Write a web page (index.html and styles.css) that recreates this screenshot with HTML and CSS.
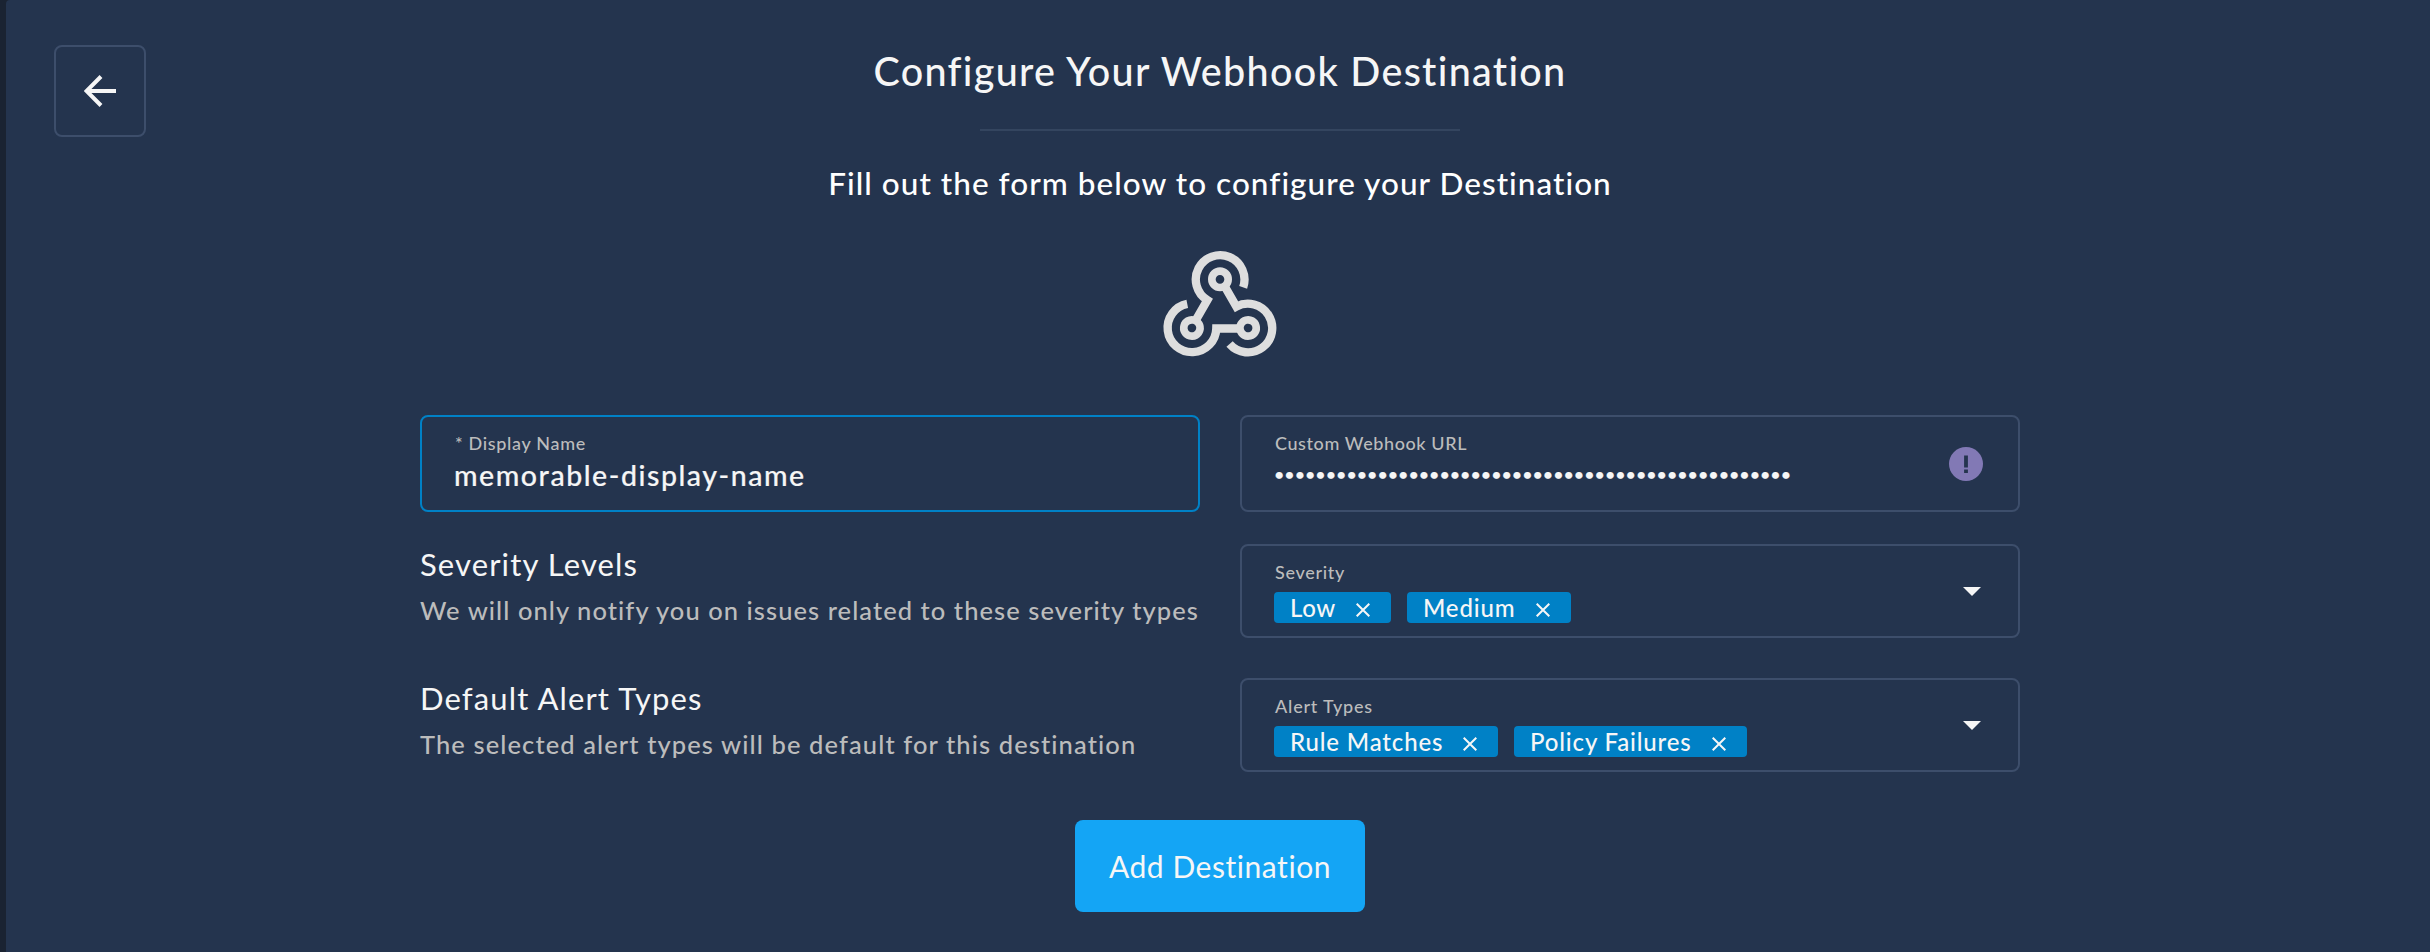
FILE: index.html
```html
<!DOCTYPE html>
<html lang="en">
<head>
<meta charset="utf-8">
<title>Configure Your Webhook Destination</title>
<link rel="stylesheet" href="styles.css">
</head>
<body>
<aside class="rail"></aside>
<main class="page">
  <button class="back" aria-label="Back">
    <svg width="32" height="32" viewBox="0 0 32 32"><path d="M32 16H4M17 1.5 2.5 16 17 30.5" fill="none" stroke="#f6f6f6" stroke-width="4"/></svg>
  </button>
  <section class="content">
    <h1 class="title">Configure Your Webhook Destination</h1>
    <hr class="divider">
    <p class="subtitle">Fill out the form below to configure your Destination</p>
    <svg class="hook" width="116" height="108" viewBox="66 60 348 324">
      <defs>
        <g id="arm" fill="none" stroke="#dedede">
          <path d="M309.5 172A73 73 0 1 0 202 210.500L167 271.100" stroke-width="25"/>
          <circle cx="240" cy="148" r="24.500" stroke-width="23"/>
        </g>
      </defs>
      <use href="#arm"/>
      <use href="#arm" transform="rotate(120 240 245.3)"/>
      <use href="#arm" transform="rotate(240 240 245.3)"/>
    </svg>
    <form class="form">
      <div class="field field-active">
        <label class="label">* Display Name</label>
        <div class="value name">memorable-display-name</div>
      </div>
      <div class="field">
        <label class="label label-url">Custom Webhook URL</label>
        <div class="value secret">••••••••••••••••••••••••••••••••••••••••••••••••••</div>
        <svg class="alert" width="34" height="34" viewBox="0 0 34 34"><circle cx="17" cy="17" r="17" fill="#8279b5"/><path d="M15.1 8.5h3.8v12h-3.8zM15.1 22.5h3.8v3.6h-3.8z" fill="#24344e"/></svg>
      </div>
      <div class="info">
        <h2 class="info-title">Severity Levels</h2>
        <p class="info-text">We will only notify you on issues related to these severity types</p>
      </div>
      <div class="select">
        <label class="label">Severity</label>
        <div class="chips">
          <span class="chip chip-low">Low<svg class="x" width="14" height="14" viewBox="0 0 14 14"><path d="M.7.7 13.3 13.3M13.3.7.7 13.3"/></svg></span>
          <span class="chip chip-medium">Medium<svg class="x" width="14" height="14" viewBox="0 0 14 14"><path d="M.7.7 13.3 13.3M13.3.7.7 13.3"/></svg></span>
        </div>
        <svg class="caret" width="18" height="9" viewBox="0 0 18 9"><path d="M0 0h18L9 9z" fill="#f6f6f6"/></svg>
      </div>
      <div class="info">
        <h2 class="info-title">Default Alert Types</h2>
        <p class="info-text info-text-alerts">The selected alert types will be default for this destination</p>
      </div>
      <div class="select">
        <label class="label label-alerts">Alert Types</label>
        <div class="chips">
          <span class="chip chip-rule">Rule Matches<svg class="x" width="14" height="14" viewBox="0 0 14 14"><path d="M.7.7 13.3 13.3M13.3.7.7 13.3"/></svg></span>
          <span class="chip chip-policy">Policy Failures<svg class="x" width="14" height="14" viewBox="0 0 14 14"><path d="M.7.7 13.3 13.3M13.3.7.7 13.3"/></svg></span>
        </div>
        <svg class="caret" width="18" height="9" viewBox="0 0 18 9"><path d="M0 0h18L9 9z" fill="#f6f6f6"/></svg>
      </div>
    </form>
    <button class="submit">Add Destination</button>
  </section>
</main>
</body>
</html>
```
FILE: styles.css
```css
* { box-sizing: border-box; margin: 0; padding: 0; }
body { display: flex; width: 2430px; height: 952px; overflow: hidden; background: #1a2332; color: #f6f6f6; font-family: Lato, "Open Sans", sans-serif; font-weight: 500; }
button { font: inherit; color: inherit; border: 0; }
.rail { width: 6px; }
.page { display: flex; flex: 1; align-items: flex-start; padding-left: 48px; background: #24344e; border-top-left-radius: 4px; }
.back { display: flex; align-items: center; justify-content: center; width: 92px; height: 92px; margin-top: 45px; background: none; border: 2px solid #3d4e6b; border-radius: 8px; }
.content { display: flex; flex-direction: column; align-items: center; width: 1600px; margin-left: 274px; padding-top: 47px; white-space: nowrap; }
.title { font-size: 39.5px; line-height: 48px; font-weight: 500; letter-spacing: 1.3px; }
.divider { width: 480px; height: 2px; margin-top: 34px; border: 0; background: #34455f; }
.subtitle { margin-top: 32px; font-size: 31.5px; line-height: 40px; letter-spacing: 1.03px; color: #fff; }
.hook { margin-top: 47px; }
.form { display: grid; grid-template: 97px 32px 94px 40px 94px / 780px 780px; column-gap: 40px; margin-top: 57px; }
.field, .select { position: relative; border: 2px solid #3d4e6b; border-radius: 8px; padding: 15px 33px 0; }
.field-active { border-color: #0081c6; }
.info:nth-child(3), .select:nth-child(4) { grid-row: 3; }
.info:nth-child(5), .select:nth-child(6) { grid-row: 5; }
.label { display: block; font-size: 18px; line-height: 22px; letter-spacing: .68px; color: #bcbcbc; }
.label-url { letter-spacing: .6px; }
.label-alerts { letter-spacing: .8px; }
.value { font-size: 28.5px; line-height: 34px; margin: 4px 0 0 -1px; -webkit-text-stroke: .2px; }
.name { letter-spacing: 1.55px; }
.secret { font-size: 17.83px; margin-top: 3px; }
.alert { position: absolute; right: 35px; top: 30px; }
.info-title { font-size: 31px; line-height: 38px; font-weight: 400; letter-spacing: 1.13px; margin-top: 1px; }
.info-text { font-size: 25.5px; line-height: 32px; letter-spacing: 1.06px; margin-top: 11px; color: #bcbcbc; }
.info-text-alerts { letter-spacing: 1.1px; }
.chips { display: flex; gap: 16px; margin: 9px 0 0 -1px; }
.chip { display: flex; align-items: center; justify-content: space-between; height: 31px; padding: 0 21px 0 16px; border-radius: 4px; background: #0081c6; font-size: 24px; line-height: 31px; letter-spacing: .85px; }
.chip-low { width: 117px; letter-spacing: .6px; }
.chip-medium { width: 164px; }
.chip-rule { width: 224px; }
.chip-policy { width: 233px; }
.x { margin-top: 5px; fill: none; stroke: #f6f6f6; stroke-width: 2; }
.caret { position: absolute; right: 37px; top: 41px; }
.submit { width: 290px; height: 92px; margin-top: 48px; border-radius: 8px; background: #14a5f5; font-size: 30px; font-weight: 400; letter-spacing: .55px; }
```
